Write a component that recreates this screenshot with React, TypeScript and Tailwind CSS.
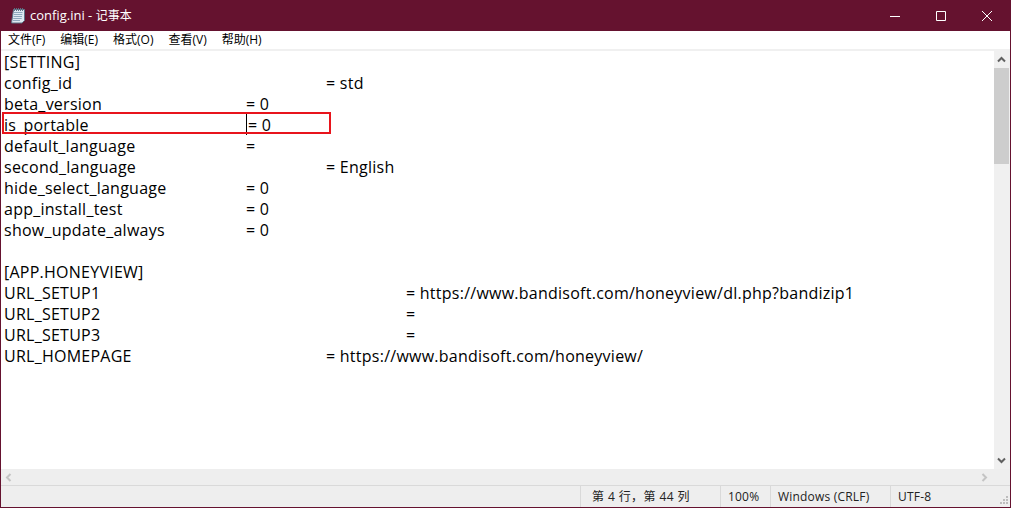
const menus = ['文件(F)', '编辑(E)', '格式(O)', '查看(V)', '帮助(H)'];

const lines = [
  '[SETTING]',
  'config_id\t\t\t\t= std',
  'beta_version\t\t= 0',
  'is_portable\t\t',
  'default_language\t\t=',
  'second_language\t\t\t= English',
  'hide_select_language\t= 0',
  'app_install_test\t\t= 0',
  'show_update_always\t= 0',
  '',
  '[APP.HONEYVIEW]',
  'URL_SETUP1\t\t\t\t= https://www.bandisoft.com/honeyview/dl.php?bandizip1',
  'URL_SETUP2\t\t\t\t=',
  'URL_SETUP3\t\t\t\t=',
  'URL_HOMEPAGE\t\t\t= https://www.bandisoft.com/honeyview/',
];

const font = "font-['Microsoft_YaHei','Open_Sans','Noto_Sans_CJK_SC',sans-serif]";

const Chevron = ({ d }: { d: string }) => (
  <svg width="9" height="9" viewBox="0 0 9 9">
    <path d={d} fill="none" stroke="currentColor" strokeWidth="2" />
  </svg>
);

const WinIcon = ({ d }: { d: string }) => (
  <svg width="10" height="10" viewBox="0 0 10 10">
    <path d={d} fill="none" stroke="white" strokeWidth="1" />
  </svg>
);

function NotepadIcon() {
  return (
    <svg width="16" height="17" viewBox="0 0 16 17" className="mr-[4px]">
      <path d="M3.5 2.5h11v11l-2.5 2.5H1.5z" fill="#dfe9f2" stroke="#5d7084" strokeWidth="1" />
      <path d="M4 5.5h8.5M3.8 7.5h8.5M3.5 9.5h8.5M3.2 11.5h8.5M3 13.5h7" stroke="#8fa8bd" strokeWidth="1" />
      <path d="M4.5 1v3M6.5 1v3M8.5 1v3M10.5 1v3M12.5 1v3" stroke="#5f7385" strokeWidth="1" />
    </svg>
  );
}

export default function App() {
  return (
    <div className={`flex h-[508px] w-[1011px] flex-col overflow-hidden border-x border-b border-[#65122f] bg-[#eeeeee] text-black ${font}`}>
      {/* Title bar */}
      <div className="flex h-[31px] shrink-0 items-center bg-[#65122f] text-white">
        <div className="flex flex-1 items-center pl-[9px] text-[13px]">
          <NotepadIcon />
          <span>config.ini - <span className="text-[12px]">记事本</span></span>
        </div>
        <div className="flex h-full w-[46px] items-center justify-center"><WinIcon d="M0 5.5h10" /></div>
        <div className="flex h-full w-[46px] items-center justify-center"><WinIcon d="M.5.5h9v9h-9z" /></div>
        <div className="flex h-full w-[46px] items-center justify-center"><WinIcon d="M0 0l10 10M10 0L0 10" /></div>
      </div>

      {/* Menu */}
      <div className="flex h-[18px] shrink-0 items-center gap-[15px] bg-white pl-[7px] text-[12px] leading-[18px]">
        {menus.map((m) => (
          <span key={m}>{m}</span>
        ))}
      </div>
      <div className="h-[2px] shrink-0 bg-[#f0f0f0]" />

      {/* Editor */}
      <div className="flex min-h-0 flex-1">
        <div className="relative flex-1 bg-white pl-[5px] pt-[1px] text-[16px] leading-[21px] tracking-[0.25px]">
          {lines.map((line, i) => (
            <div key={i} className="h-[21px] whitespace-pre indent-[-2px] [tab-size:80px]">
              {line}
              {i === 3 && <span className="ml-[2px]">= 0</span>}
            </div>
          ))}
          <div className="absolute left-[245px] top-[62px] h-[22px] w-px bg-black" />
          <div className="absolute left-[1px] top-[61px] h-[22px] w-[329px] border-2 border-[#e8141c]" />
        </div>
        <div className="flex w-[16px] shrink-0 flex-col items-center bg-[#f0f0f0] pr-[1px] text-[#606060]">
          <div className="flex h-[17px] shrink-0 items-center justify-center">
            <Chevron d="M1 6.5l3.5-3.5 3.5 3.5" />
          </div>
          <div className="h-[96px] w-full shrink-0 bg-[#cdcdcd]" />
          <div className="flex-1" />
          <div className="flex h-[17px] shrink-0 items-center justify-center">
            <Chevron d="M1 2.5l3.5 3.5 3.5-3.5" />
          </div>
        </div>
      </div>

      {/* Horizontal scrollbar */}
      <div className="flex h-[17px] shrink-0 items-center justify-between border-b border-[#d9d9d9] pl-[3px] pr-[21px] text-[#c4c4c4]">
        <Chevron d="M6.5 1L3 4.5l3.5 3.5" />
        <Chevron d="M2.5 1L6 4.5 2.5 8" />
      </div>

      {/* Status bar */}
      <div className="relative flex h-[21px] shrink-0 items-center text-[12px] tracking-[0.2px] text-[#222222]">
        <div className="flex-1" />
        <div className="flex h-full w-[140px] items-center border-l border-[#d9d9d9] pl-[11px] tracking-[0.4px]">第 4 行，第 44 列</div>
        <div className="flex h-full w-[50px] items-center border-l border-[#d9d9d9] pl-[7px]">100%</div>
        <div className="flex h-full w-[120px] items-center border-l border-[#d9d9d9] pl-[7px]">Windows (CRLF)</div>
        <div className="flex h-full w-[120px] items-center border-l border-[#d9d9d9] pl-[7px]">UTF-8</div>
        <svg width="10" height="10" viewBox="0 0 10 10" className="absolute bottom-[2px] right-[1px]">
          <path d="M7 1h2v2H7zM4 4h2v2H4zM7 4h2v2H7zM1 7h2v2H1zM4 7h2v2H4zM7 7h2v2H7z" fill="#bdbdbd" />
        </svg>
      </div>
    </div>
  );
}
